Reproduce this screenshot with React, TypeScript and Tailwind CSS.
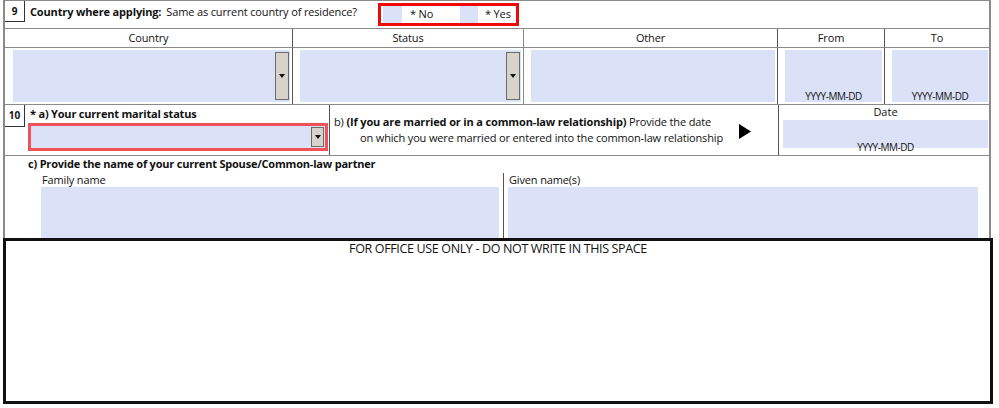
import React from "react";

const font = { fontFamily: "'Open Sans', Lato, sans-serif" };

function Drop({ className = "" }: { className?: string }) {
  return (
    <div className={"flex items-center justify-center bg-[#d6d3cb] border border-[#6b6b6b] " + className}>
      <svg width="6" height="4" viewBox="0 0 6 4"><path d="M0 0H6L3 4Z" fill="#111" /></svg>
    </div>
  );
}

export default function App() {
  return (
    <div className="w-[999px] h-[408px] bg-white text-[#111] overflow-hidden" style={font}>
      <div className="ml-[3px] w-[988px] border-x-2 border-[#8a8a8a]">
        {/* Row 9 */}
        <div className="h-[28px] flex items-start border-t border-[#8a8a8a]">
          <div className="w-[20px] h-[21px] border-r border-b border-[#333] flex items-center justify-center text-[10px] font-bold">9</div>
          <div className="w-[353px] pl-[5px] pt-[4px] text-[11px] leading-[13px] whitespace-nowrap tracking-[-0.15px]">
            <span className="font-bold">Country where applying:</span>
            <span className="ml-[5px]">Same as current country of residence?</span>
          </div>
          <div className="mt-[2px] w-[141px] h-[23px] border-[3px] border-[#ee0a0a] flex items-center text-[11px] tracking-[-0.15px]">
            <div className="ml-[2px] w-[19px] h-[17px] bg-[#dbe2f8]" />
            <span className="ml-[8px] w-[50px]">* No</span>
            <div className="w-[18px] h-[17px] bg-[#dbe2f8]" />
            <span className="ml-[7px]">* Yes</span>
          </div>
        </div>
        {/* Header row */}
        <div className="h-[20px] flex border-t border-b border-[#8a8a8a] text-[11px] tracking-[-0.15px]">
          <div className="w-[288px] border-r border-[#555] flex items-center justify-center">Country</div>
          <div className="w-[231px] border-r border-[#8a8a8a] flex items-center justify-center">Status</div>
          <div className="w-[254px] border-r border-[#555] flex items-center justify-center">Other</div>
          <div className="w-[107px] border-r border-[#555] flex items-center justify-center">From</div>
          <div className="flex-1 flex items-center justify-center">To</div>
        </div>
        {/* Input row */}
        <div className="h-[57px] flex border-b border-[#8a8a8a]">
          <div className="w-[288px] border-r border-[#555] pl-[8px] pr-[2px] py-[2px]">
            <div className="h-full bg-[#dbe2f8] flex items-center justify-end pr-[1px]">
              <Drop className="w-[14px] h-[48px]" />
            </div>
          </div>
          <div className="w-[231px] border-r border-[#8a8a8a] pl-[7px] pr-[2px] py-[2px]">
            <div className="h-full bg-[#dbe2f8] flex items-center justify-end pr-[1px]">
              <Drop className="w-[14px] h-[48px]" />
            </div>
          </div>
          <div className="w-[254px] border-r border-[#555] pl-[7px] pr-[2px] py-[2px]">
            <div className="h-full bg-[#dbe2f8]" />
          </div>
          <div className="w-[107px] border-r border-[#555] pl-[7px] pr-[2px] py-[2px]">
            <div className="h-full bg-[#dbe2f8] flex items-end justify-center text-[10px] leading-[12px] tracking-[-0.5px]">YYYY-MM-DD</div>
          </div>
          <div className="flex-1 pl-[7px] pr-[1px] py-[2px]">
            <div className="h-full bg-[#dbe2f8] flex items-end justify-center text-[10px] leading-[12px] tracking-[-0.5px]">YYYY-MM-DD</div>
          </div>
        </div>
        {/* Row 10 */}
        <div className="h-[51px] flex border-b border-[#8a8a8a]">
          <div className="w-[325px] border-r border-[#555] flex">
            <div className="w-[20px] h-[22px] border-r border-b border-[#333] flex items-center justify-center text-[10px] font-bold">10</div>
            <div className="flex-1 flex flex-col pl-[3px]">
              <div className="mt-[2px] pl-[2px] text-[11px] leading-[13px] font-bold tracking-[-0.2px]">* a) Your current marital status</div>
              <div className="mt-[3px] w-[300px] h-[28px] border-[3px] border-[#f0525a] bg-[#dbe2f8] flex justify-end items-center pr-[1px]">
                <Drop className="w-[13px] h-[20px]" />
              </div>
            </div>
          </div>
          <div className="w-[449px] border-r border-[#555] flex items-center">
            <div className="ml-[4px] text-[11px] leading-[16px] tracking-[-0.15px] whitespace-nowrap">
              <div>b) <span className="font-bold">(If you are married or in a common-law relationship)</span> Provide the date</div>
              <div className="pl-[26px]">on which you were married or entered into the common-law relationship</div>
            </div>
            <svg className="ml-auto mr-[27px] mt-[2px]" width="12" height="15" viewBox="0 0 12 15"><path d="M0 0L12 7.5L0 15Z" fill="#000" /></svg>
          </div>
          <div className="flex-1 flex flex-col pl-[4px] pr-[1px]">
            <div className="h-[15px] flex items-center justify-center text-[11px]">Date</div>
            <div className="h-[28px] bg-[#dbe2f8] flex items-end justify-center">
              <span className="text-[10px] leading-[12px] tracking-[-0.5px] translate-y-[5px]">YYYY-MM-DD</span>
            </div>
          </div>
        </div>
        {/* Row c */}
        <div className="h-[82px] flex flex-col">
          <div className="mt-[1px] ml-[23px] text-[11px] leading-[13px] font-bold tracking-[-0.2px]">c) Provide the name of your current Spouse/Common-law partner</div>
          <div className="flex flex-1 mt-[3px]">
            <div className="ml-[36px] w-[458px] flex flex-col">
              <div className="text-[11px] leading-[13px] pl-[1px] tracking-[-0.15px]">Family name</div>
              <div className="flex-1 bg-[#dbe2f8] mt-[1px]" />
            </div>
            <div className="ml-[4px] border-l border-[#555] pl-[4px] w-[475px] flex flex-col">
              <div className="text-[11px] leading-[13px] pl-[1px] tracking-[-0.15px]">Given name(s)</div>
              <div className="flex-1 bg-[#dbe2f8] mt-[1px]" />
            </div>
          </div>
        </div>
      </div>
      {/* Office box */}
      <div className="ml-[3px] w-[990px] h-[166px] border-[3px] border-[#111] flex justify-center">
        <div className="mt-[1px] text-[12.5px] leading-[14px] tracking-[-0.35px]">FOR OFFICE USE ONLY - DO NOT WRITE IN THIS SPACE</div>
      </div>
    </div>
  );
}
